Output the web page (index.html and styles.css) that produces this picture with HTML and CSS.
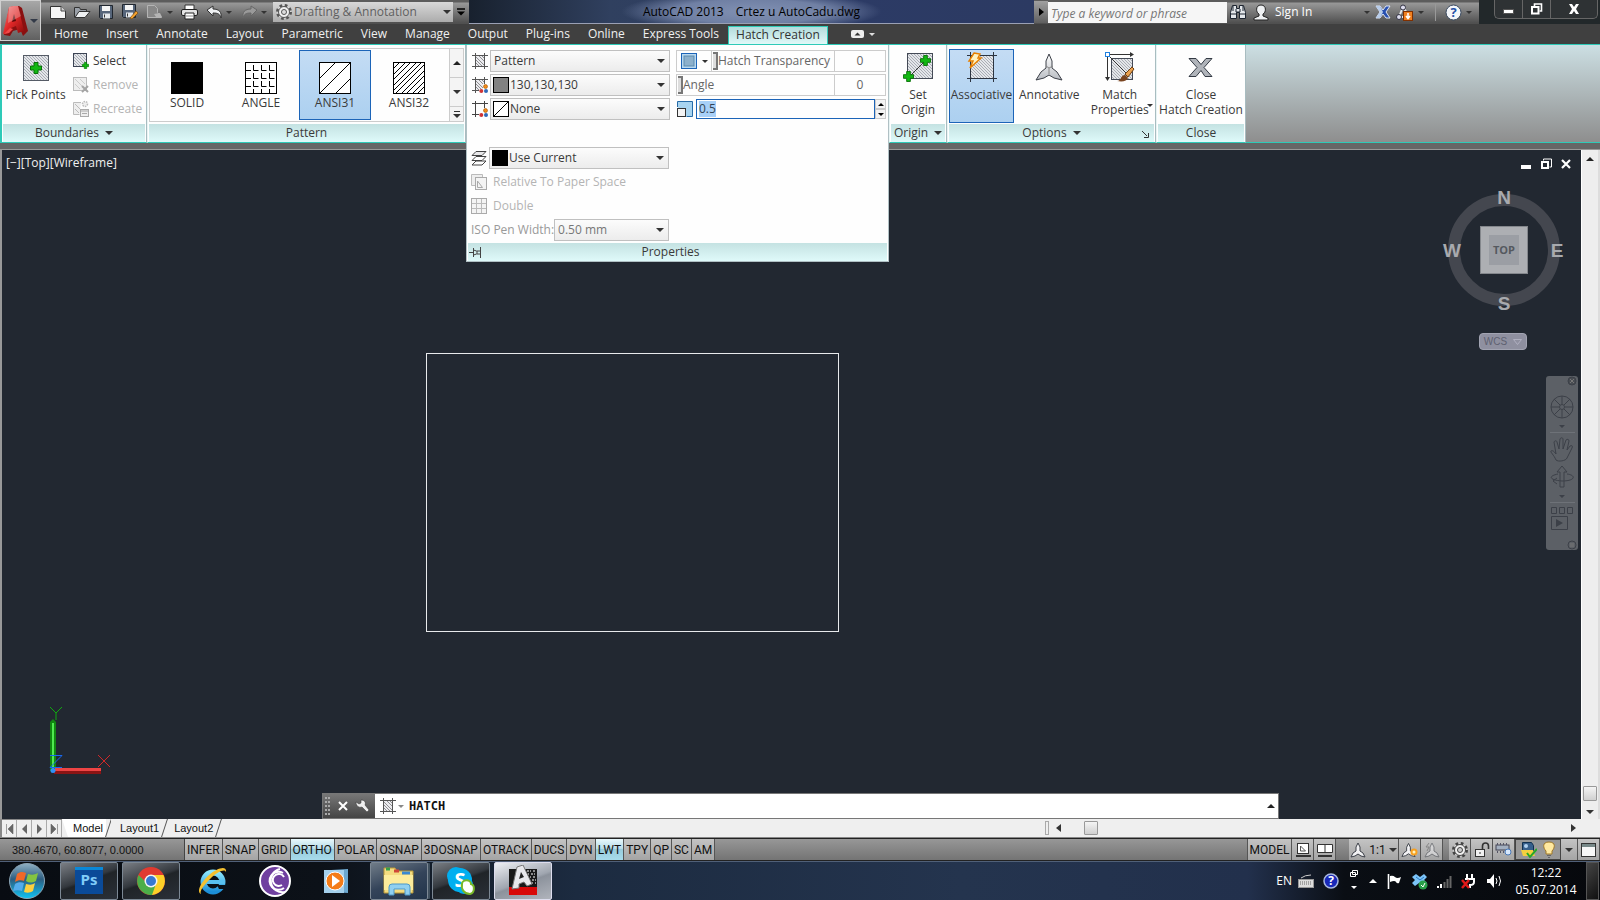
FILE: index.html
```html
<!DOCTYPE html>
<html lang="en">
<head>
<meta charset="utf-8">
<title>AutoCAD 2013 - Crtez u AutoCadu.dwg</title>
<link rel="stylesheet" href="styles.css">
</head>
<body>
<svg class="defs" width="0" height="0" aria-hidden="true">
  <defs>
    <pattern id="h" width="3" height="3" patternUnits="userSpaceOnUse"><rect width="3" height="3" fill="#e4e6ea"/><path d="M-1 -1L4 4M-1 2L1 4M2 -1L4 1" stroke="#9a9ea6" stroke-width=".8"/></pattern>
    <linearGradient id="logo" x1="0" y1="0" x2="1" y2="1"><stop offset="0" stop-color="#f08080"/><stop offset=".5" stop-color="#e02828"/><stop offset="1" stop-color="#8a0a0a"/></linearGradient>
    <linearGradient id="orb" x1="0" y1="0" x2="0" y2="1"><stop offset="0" stop-color="#8fb0c4"/><stop offset=".45" stop-color="#2c5d80"/><stop offset="1" stop-color="#10c4f4"/></linearGradient>
    <linearGradient id="ie" x1="0" y1="0" x2="0" y2="1"><stop offset="0" stop-color="#8ae4fc"/><stop offset="1" stop-color="#1c8fd8"/></linearGradient>
    <linearGradient id="steel" x1="0" y1="0" x2="0" y2="1"><stop offset="0" stop-color="#fff"/><stop offset="1" stop-color="#b8bcc2"/></linearGradient>
    <symbol id="plus" viewBox="0 0 12 12"><path d="M4 .5h4v3.500h3.500v4h-3.500v3.500h-4v-3.500h-3.500v-4h3.500z" fill="#12b812" stroke="#087008"/></symbol>
    <symbol id="hatch" viewBox="0 0 16 16"><path d="M3.500 0v16M0 2.500h16M12.500 0v16M0 13.500h16" stroke="#555" fill="none"/><rect x="4" y="3" width="8" height="10" fill="#ececf0"/><path d="M4 4l8 8M7 3l5 5M10 3l2 2M4 7l6 6M4 10l3 3" stroke="#777" stroke-width=".8"/></symbol>
    <symbol id="dots" viewBox="0 0 9 9"><rect x="0" y="5" width="9" height="4" fill="#fefefe"/><rect x="4" y="0" width="5" height="5" fill="#fefefe"/><circle cx="6.500" cy="2.500" r="2" fill="#f08a18" stroke="#a85400" stroke-width=".6"/><circle cx="2.300" cy="7" r="2" fill="#d03434"/><circle cx="7" cy="7" r="2" fill="#2f68b8"/></symbol>
    <symbol id="annot" viewBox="0 0 28 28"><path d="M14 1l3 7v7l5 4 5 8-8-2-5-3-5 3-8 2 5-8 5-4v-7z" fill="url(#steel)" stroke="#3c4048"/><path d="M14 15v6M14 15l-3-2M14 15l4-2" stroke="#888" fill="none"/></symbol>
    <symbol id="annots" viewBox="0 0 16 16"><path d="M8 1l2 4v4l3 2 2 4-4-1-3-2-3 2-4 1 2-4 3-2v-4z" fill="#f2f2f4" stroke="#3c4048"/></symbol>
    <symbol id="floppy" viewBox="0 0 14 14"><path d="M.5.5h13v13h-12l-1-1z" fill="#56657a" stroke="#20262e"/><rect x="3" y="1" width="8" height="5" fill="#f4f4f4"/><rect x="4" y="8.500" width="7" height="5" fill="#e4e8ec"/><path d="M5.500 9.500v3" stroke="#333"/></symbol>
  </defs>
</svg>

<header class="head">
  <button class="appbtn" aria-label="Application menu">
    <svg width="26" height="34" viewBox="0 0 26 34"><path d="M1 31L6 4l4-2h6l3 2 6 23-5 5-3-7-7 2-3 5z" fill="#8a1010"/><path d="M0 30L6 3l4-1h5l6 25-6 2-2-7-5 2-2 5z" fill="url(#logo)"/><path d="M9 18l2-8 2 7z" fill="#5c0808"/><path d="M6 3l4-1h5l3 10-13 7z" fill="#fff" opacity=".28"/><path d="M1 30l5-1 4-4-3-1z" fill="#f04848"/></svg>
    <i class="tri lite"></i>
  </button>
  <div class="titlebar">
    <div class="quick">
      <button aria-label="New"><svg width="18" height="16"><path d="M1.500 2.500h11l4 4v8h-15z" fill="#f6f6f6" stroke="#333"/><path d="M12 2v5h5" fill="#ccc" stroke="#444"/></svg></button>
      <button aria-label="Open"><svg width="18" height="16"><path d="M1.500 13.500v-10h5l1 2h6v2" fill="#9aa0a8" stroke="#333"/><path d="M2 13.500l4-6h11l-5 6z" fill="#eef0f2" stroke="#333"/></svg></button>
      <button aria-label="Save"><svg width="14" height="14"><use href="#floppy"/></svg></button>
      <button aria-label="Save as"><svg width="17" height="16"><use href="#floppy" width="14" height="14"/><path d="M8 14l6-7 2 2-6 6z" fill="#f0a030" stroke="#704000" stroke-width=".6"/></svg></button>
      <button class="wide" aria-label="Plot preview" disabled><svg width="18" height="16"><path d="M1.500 1.500h7l3 3v4l4 5h-14z" fill="#888" stroke="#b4b4b4"/><path d="M8 10l6-1 2 4h-6z" fill="#b4b4b4"/></svg><i class="tri"></i></button>
      <button aria-label="Plot"><svg width="17" height="16"><path d="M4 5v-4h9v4" fill="#fff" stroke="#333"/><rect x=".5" y="5.500" width="16" height="6" rx="1.500" fill="#e4e4e4" stroke="#222"/><path d="M4 9h9v6h-9z" fill="#fff" stroke="#222"/><path d="M5 12h7" stroke="#888"/></svg></button>
      <button class="wide" aria-label="Undo"><svg width="17" height="14"><path d="M1 5l6-4v3c6 0 9 3 8 9-1-4-3-5-8-5v3z" fill="#eef0f2" stroke="#333"/></svg><i class="tri"></i></button>
      <button class="wide" aria-label="Redo" disabled><svg width="17" height="14"><path d="M16 5l-6-4v3c-6 0-9 3-8 9 1-4 3-5 8-5v3z" fill="#999" stroke="#666"/></svg><i class="tri"></i></button>
      <label class="workspace"><svg width="18" height="18" viewBox="-9 -9 18 18"><circle r="6.500" fill="#eee" stroke="#555" stroke-width="3" stroke-dasharray="2.600 2.500"/><circle r="5.500" fill="#eee" stroke="#555"/><circle r="2.500" fill="#ddd" stroke="#555"/></svg>
        <select aria-label="Workspace"><option>Drafting &amp; Annotation</option></select><i class="tri dark"></i></label>
      <button class="custom" aria-label="Customize toolbar"><svg width="10" height="8"><path d="M1 1h8" stroke="#000" stroke-width="1.500"/><path d="M1 3.500h8l-4 4z"/></svg></button>
    </div>
    <div class="caption"><span>AutoCAD 2013</span><span>Crtez u AutoCadu.dwg</span></div>
    <div class="info">
      <button class="expand" aria-label="Collapse search"><svg width="5" height="8"><path d="M0 0l5 4-5 4z"/></svg></button>
      <input type="text" placeholder="Type a keyword or phrase" aria-label="Search">
      <button aria-label="Find"><svg width="16" height="16"><path d="M.5 14.500v-6l2-7h4v3h3v-3h4l2 7v6h-6v-6h-3v6z" fill="#e4e8ec" stroke="#1c2430"/><path d="M.5 10h6M9.500 10h6M3 2v5M13 2v5M6 5v3h4v-3" stroke="#1c2430" fill="none"/></svg></button>
      <button class="sign"><svg width="16" height="17"><path d="M8 1c6 0 5 8 2 9v2l5 2v2h-14v-2l5-2v-2c-3-1-4-9 2-9z" fill="#eef0f2" stroke="#222"/></svg>Sign In<i class="tri"></i></button>
      <button aria-label="Exchange"><svg width="16" height="14"><path d="M1 1h4l3 4 3-4h4l-4 6 4 6h-4l-3-4-3 4h-4l4-6z" fill="#2850b0" stroke="#dde4f4"/><path d="M1 1h4l3 6-3 6h-4l4-6z" fill="#b8cdea"/></svg></button>
      <button class="wide2" aria-label="Stay connected"><svg width="18" height="17"><path d="M7 3l-4 10h6M7 3l4 6" stroke="#e8eaec" stroke-width="2" fill="none"/><circle cx="7" cy="3.500" r="2.500" fill="#dde" stroke="#334"/><circle cx="3" cy="13" r="2.500" fill="#dde" stroke="#334"/><rect x="7.500" y="7.500" width="9" height="9" fill="#f08020" stroke="#803000"/><path d="M12 9v5M10 12l2 2.500 2-2.500" stroke="#fff" fill="none" stroke-width="1.500"/></svg><i class="tri"></i></button>
      <button class="help" aria-label="Help"><svg width="17" height="17"><circle cx="8.500" cy="8.500" r="7.500" fill="#f4f6fa" stroke="#3a4a60"/><text x="8.500" y="13" text-anchor="middle" class="qm">?</text></svg><i class="tri"></i></button>
    </div>
    <div class="winctl">
      <button aria-label="Minimize"><svg width="13" height="12"><rect x="1.500" y="6.500" width="10" height="4" fill="#fff" stroke="#555"/></svg></button>
      <button aria-label="Restore"><svg width="13" height="12"><path d="M4.500 3v-2h7v7h-2" stroke="#fff" stroke-width="1.600" fill="none"/><rect x="2" y="4" width="6.500" height="6.500" fill="none" stroke="#fff" stroke-width="2"/></svg></button>
      <button class="x" aria-label="Close"><svg width="12" height="10"><path d="M1 0h3l2 3 2-3h3l-3 5 3 5h-3l-2-3-2 3h-3l3-5z" fill="#fff"/></svg></button>
    </div>
  </div>
  <nav class="tabs">
    <button>Home</button><button>Insert</button><button>Annotate</button><button>Layout</button><button>Parametric</button><button>View</button><button>Manage</button><button>Output</button><button>Plug-ins</button><button>Online</button><button>Express Tools</button><button class="on">Hatch Creation</button>
    <button class="mini" aria-label="Minimize ribbon"><svg width="24" height="8"><rect width="13" height="8" rx="2" fill="#eee"/><path d="M3.500 5.500h6l-3-3z" fill="#333"/><path d="M18 3h6l-3 3z" fill="#ddd"/></svg></button>
  </nav>
</header>

<section class="ribbon">
  <div class="panel bounds">
    <div class="body">
      <button class="big pick"><svg width="28" height="30"><rect x="1.500" y="3.500" width="25" height="25" fill="url(#h)" stroke="#555b66"/><use href="#plus" x="8" y="10" width="12" height="12"/></svg>Pick Points</button>
      <div class="smalls">
        <button><svg width="18" height="18"><rect x="1.500" y="1.500" width="13" height="13" fill="url(#h)" stroke="#3c4454"/><use href="#plus" x="10" y="10" width="7" height="7"/></svg>Select</button>
        <button disabled><svg width="18" height="18"><rect x="1.500" y="1.500" width="13" height="13" fill="#eee" stroke="#bbb"/><path d="M3 3l10 10M3 8l5 5M8 3l5 5" stroke="#ccc"/><path d="M10 10l6 6M16 10l-6 6" stroke="#a4a4a4" stroke-width="2"/></svg>Remove</button>
        <button disabled><svg width="18" height="18"><path d="M9 2.500h-7.500v12h6" fill="#eee" stroke="#bbb"/><path d="M3 4l5 5M3 9l4 4" stroke="#bbb"/><circle cx="13" cy="4" r="2.500" fill="#eee" stroke="#bbb" stroke-width="1.500" stroke-dasharray="1.500 1"/><rect x="8.500" y="9.500" width="8" height="7" fill="#eee" stroke="#aaa"/><path d="M8.500 11h8M10 13.500h5" stroke="#aaa"/></svg>Recreate</button>
      </div>
    </div>
    <button class="foot">Boundaries<i class="tri dark"></i></button>
  </div>
  <div class="panel pattern">
    <div class="body">
      <div class="gallery">
        <button><svg width="32" height="32"><rect width="32" height="32"/></svg>SOLID</button>
        <button><svg width="32" height="32"><rect x=".5" y=".5" width="31" height="31" fill="#fff" stroke="#000"/><path d="M1 8.500h5M8.500 3v5.500h5M16.500 3v5.500h5M24.500 3v5.500h5M1 16.500h5M8.500 11v5.500h5M16.500 11v5.500h5M24.500 11v5.500h5M1 24.500h5M8.500 19v5.500h5M16.500 19v5.500h5M24.500 19v5.500h5M8.500 27v4M16.500 27v4M24.500 27v4" stroke="#000" fill="none"/></svg>ANGLE</button>
        <button class="on"><svg width="32" height="32"><rect x=".5" y=".5" width="31" height="31" fill="#fff" stroke="#000"/><path d="M1 16L16 1M1 31L31 1M17 31L31 17" stroke="#000"/></svg>ANSI31</button>
        <button><svg width="32" height="32"><rect x=".5" y=".5" width="31" height="31" fill="#fff" stroke="#000"/><path d="M1 6l5-5M1 12L12 1M1 17L17 1M1 23L23 1M1 28L28 1M3 31L31 3M9 31L31 9M14 31L31 14M20 31L31 20M25 31l6-6" stroke="#000"/></svg>ANSI32</button>
        <div class="gscroll">
          <button aria-label="Up"><i class="tri up dark"></i></button><button aria-label="Down"><i class="tri dark"></i></button><button class="more" aria-label="More patterns"><svg width="8" height="8"><path d="M1 1.500h6" stroke="#333"/><path d="M0 4h8l-4 4z" fill="#333"/></svg></button>
        </div>
      </div>
    </div>
    <div class="foot">Pattern</div>
  </div>
  <div class="slot">
    <form class="props">
      <div class="cols">
        <div class="colA">
          <div class="row"><svg width="16" height="16"><use href="#hatch"/></svg><span class="combo"><select aria-label="Hatch type"><option>Pattern</option></select><i class="tri dark"></i></span></div>
          <div class="row"><svg width="16" height="16"><use href="#hatch"/><use href="#dots" x="7" y="7" width="9" height="9"/></svg><span class="combo"><b class="sw gray"></b><select aria-label="Hatch color"><option>130,130,130</option></select><i class="tri dark"></i></span></div>
          <div class="row"><svg width="16" height="16"><path d="M3.500 0v16M0 2.500h16M12.500 0v8M0 13.500h8" stroke="#444"/><use href="#dots" x="7" y="7" width="9" height="9"/></svg><span class="combo"><b class="sw none"><svg width="14" height="14"><path d="M0 14L14 0" stroke="#000"/></svg></b><select aria-label="Background color"><option>None</option></select><i class="tri dark"></i></span></div>
        </div>
        <div class="colB">
          <div class="row field"><button type="button" class="tbtn" aria-label="Transparency"><svg width="16" height="16"><rect x=".5" y=".5" width="15" height="15" fill="#b8d8f0" stroke="#1c64b8"/><rect x="3" y="3" width="10" height="10" fill="#8cb0cc" stroke="#5c8cb0"/></svg><i class="tri"></i></button><i class="grip"></i><span class="grow">Hatch Transparency</span><output>0</output></div>
          <div class="row field"><i class="grip"></i><span class="grow">Angle</span><output>0</output></div>
          <div class="row scale"><svg width="16" height="16"><path d="M.5 6v-5.500h15v15h-6" fill="#a8d4f0" stroke="#286ca8"/><rect x=".5" y="7.500" width="8" height="8" fill="#f4f4f4" stroke="#333"/></svg><span class="numbox"><span class="sel"><input type="text" value="0.5" aria-label="Hatch pattern scale"></span></span><span class="spin"><button type="button" aria-label="Increase"><i class="tri up"></i></button><button type="button" aria-label="Decrease"><i class="tri"></i></button></span></div>
        </div>
      </div>
      <div class="lower">
        <div class="row"><svg width="16" height="16"><path d="M1 15l4-4h10l-4 4z" fill="#fff" stroke="#444"/><path d="M1 10.500l4-4h10l-4 4z" fill="#fff" stroke="#444"/><path d="M1 5.500l4-4h10l-4 4z" fill="#e8e8ea" stroke="#444"/></svg><span class="combo"><b class="sw black"></b><select aria-label="Layer"><option>Use Current</option></select><i class="tri dark"></i></span></div>
        <button type="button" class="row plain" disabled><svg width="16" height="16"><path d="M4 11.500h-3.500v-11h11v3" fill="#eee" stroke="#bbb"/><rect x="4.500" y="3.500" width="11" height="12" fill="#f4f4f4" stroke="#aaa"/><path d="M6.500 7v6.500h5z" fill="none" stroke="#aaa"/></svg>Relative To Paper Space</button>
        <button type="button" class="row plain" disabled><svg width="16" height="16"><rect x=".5" y=".5" width="15" height="15" fill="#f4f4f4" stroke="#aaa"/><path d="M5.500 1v14M10.500 1v14M1 5.500h14M1 10.500h14" stroke="#bbb"/></svg>Double</button>
        <div class="row iso"><label for="iso">ISO Pen Width:</label><span class="combo"><select id="iso" disabled><option>0.50 mm</option></select><i class="tri"></i></span></div>
      </div>
      <div class="foot"><svg class="pin" width="14" height="12"><path d="M0 6.500h4M4.500 2v9M11.500 1v11M4.500 4l3 1h4M4.500 9l3-1h4M8 5v3" stroke="#444" fill="none"/></svg>Properties</div>
    </form>
  </div>
  <div class="panel origin">
    <div class="body"><button class="big"><svg width="30" height="30"><rect x="4.500" y="1.500" width="25" height="25" fill="url(#h)" stroke="#444a56"/><path d="M6 25L22 9" stroke="#333"/><use href="#plus" x="17" y="3" width="11" height="11"/><use href="#plus" x="0" y="19" width="11" height="11"/></svg>Set<br>Origin</button></div>
    <button class="foot">Origin<i class="tri dark"></i></button>
  </div>
  <div class="panel options">
    <div class="body">
      <button class="big on"><svg width="30" height="30"><rect x="4" y="4" width="22" height="22" fill="url(#h)"/><path d="M3.500 0v30M0 3.500h30M26.500 0v30M0 26.500h30" stroke="#2c3440"/><path d="M7 1l6 1-2 4 3 0-11 10 3-7-4 0z" fill="#fff2c0" stroke="#e88000" stroke-width="1.500"/></svg>Associative</button>
      <button class="big"><svg width="30" height="30"><use href="#annot" x="1" y="1" width="28" height="28"/></svg>Annotative</button>
      <button class="big match"><svg width="30" height="30"><rect x="6.500" y="6.500" width="21" height="21" fill="url(#h)" stroke="#444a56"/><path d="M5 2.500h22M2.500 5v22M4 4l20 20" stroke="#333"/><path d="M25 0l4 2.500-4 2.500zM0 25h5l-2.500 4z" fill="#333"/><rect x=".5" y=".5" width="4" height="4" fill="#fff" stroke="#2080e0"/><path d="M20 22l7-7 2 2-6 8z" fill="#e8a050" stroke="#704010"/><path d="M12 29c5 0 3-6 8-6l3 3c-1 3-5 4-11 3z" fill="#7a4420"/></svg>Match<br>Properties<i class="tri dark"></i></button>
    </div>
    <button class="foot">Options<i class="tri dark"></i><svg class="launch" width="7" height="7"><path d="M0 0l5 5M6.500 2v4.500h-4.500" stroke="#333" fill="none"/></svg></button>
  </div>
  <div class="panel close">
    <div class="body"><button class="big"><svg width="30" height="30"><path d="M3 6.500h7l5 6 5-6h6l-8 9 8 9h-7l-4-6-5 6h-7l8-9z" fill="#b0b4ba" stroke="#333a44"/></svg>Close<br>Hatch Creation</button></div>
    <div class="foot">Close</div>
  </div>
  <div class="rest"></div>
</section>

<main class="work">
  <div class="canvas">
    <div class="viewlabel"><button>[−]</button><button>[Top]</button><button>[Wireframe]</button></div>
    <svg class="shape" width="413" height="279"><rect x=".5" y=".5" width="412" height="278" fill="none" stroke="#e8eaec"/></svg>
    <svg class="ucs" width="64" height="74"><rect x="1" y="15" width="6" height="49" fill="#108810"/><rect x="3" y="16" width="2" height="48" fill="#50e850"/><path d="M1 15l3-3 3 3z" fill="#108810"/><rect x="6" y="61" width="46" height="3" fill="#ee4444"/><rect x="5" y="64" width="47" height="3" fill="#8a1414"/><path d="M1 0l6 6M13 0l-6 6v7" stroke="#10a810" fill="none"/><path d="M49 48l12 12M61 48l-12 12" stroke="#d02828"/><path d="M1 48.500h12l-12 12h12" stroke="#1868f0" fill="none"/><circle cx="4" cy="63.500" r="2.500" fill="#3090f8"/></svg>
    <div class="docctl">
      <button aria-label="Minimize drawing"><svg width="12" height="12"><rect x="1" y="7" width="10" height="4" fill="#fff"/></svg></button>
      <button aria-label="Restore drawing"><svg width="12" height="12"><path d="M3.500 2.500v-1.500h8v8h-2" stroke="#fff" fill="none"/><rect x="2" y="4" width="6" height="6" fill="none" stroke="#fff" stroke-width="2"/></svg></button>
      <button aria-label="Close drawing"><svg width="12" height="12"><path d="M2 2l8 8M10 2l-8 8" stroke="#fff" stroke-width="2.200"/></svg></button>
    </div>
    <svg class="cube" width="124" height="126" viewBox="-62 -63 124 126"><circle r="50" fill="none" stroke="#44474f" stroke-width="12"/><rect x="-23.500" y="-23.500" width="47" height="47" fill="#adafb3" stroke="#84878c"/><rect x="-15" y="-15" width="30" height="30" fill="#9b9ea4"/><g class="dirs" text-anchor="middle"><text y="-46">N</text><text y="60">S</text><text x="-52" y="7">W</text><text x="53" y="7">E</text></g><text class="top" y="4" text-anchor="middle">TOP</text></svg>
    <button class="wcs">WCS<svg width="9" height="6"><path d="M.5.5h8l-4 5z" fill="none" stroke="#b0b0c0"/></svg></button>
    <svg class="navbar" width="32" height="174"><rect width="32" height="174" rx="3" fill="#5c6066"/><g fill="none" stroke="#3c4048"><circle cx="26" cy="5" r="4" fill="#484c52"/><path d="M24 3l4 4M28 3l-4 4M24 168h4M24 170h4" stroke="#777"/><circle cx="16" cy="31" r="11"/><circle cx="16" cy="31" r="2.500"/><path d="M16 20v8M16 34v8M5 31h8M19 31h8M8 23l6 6M24 23l-6 6M8 39l6-6M24 39l-6-6"/><path d="M10 84c-2-5-6-8-5-9s3 0 5 3l-2-12c1-2 3-1 3 0l2 7 1-10c1-2 3-1 3 0v10l3-9c1-1 3-1 3 1l-2 9 3-4c2-1 3 0 2 2l-5 10c-1 3-9 4-11 2z"/><path d="M14 111v-15h-3l5-6 5 6h-3v15zM12 98c-10 2-9 6 4 7 14 0 14-6 5-7M11 102l-4 3 4 3"/><path d="M5.500 131.500h5v6h-5zM13.500 131.500h5v6h-5zM21.500 131.500h5v6h-5zM5.500 140.500h16v13h-16z"/><circle cx="26" cy="169" r="4"/></g><path d="M4 56.500h25M4 126.500h25" stroke="#6e7278"/><path d="M13 49h6l-3 3zM13 119h6l-3 3zM10 143l7 4-7 4z" fill="#3c4048"/></svg>
    <div class="cmd">
      <div class="cmdgrip"><svg width="6" height="18"><path d="M1 0v18M4 0v18" stroke="#aaa" stroke-width="2" stroke-dasharray="2 2"/></svg><button aria-label="Close command line"><svg width="10" height="10"><path d="M1 1l8 8M9 1l-8 8" stroke="#fff" stroke-width="2"/></svg></button><button aria-label="Customize"><svg width="14" height="14"><path d="M1 3l3 2 2-1 0-3c4 0 5 3 4 5l4 5-2 2-5-5c-3 1-6-1-6-5z" fill="#eee" stroke="#333" stroke-width=".5"/></svg></button></div>
      <svg width="16" height="16"><use href="#hatch"/></svg><i class="tri"></i>
      <input type="text" value="HATCH" aria-label="Command">
      <button class="hist" aria-label="Command history"><i class="tri up dark"></i></button>
    </div>
  </div>
  <div class="vscroll"><i class="tri up dark"></i><span class="thumb"></span><i class="tri dark"></i></div>
</main>

<div class="sheets">
  <div class="nav"><button aria-label="First"><svg width="9" height="10"><path d="M1.500 0v10M8 0l-5 5 5 5z" stroke="#666" fill="#666" stroke-width=".6"/></svg></button><button aria-label="Previous"><svg width="9" height="10"><path d="M7 0l-5 5 5 5z" fill="#666"/></svg></button><button aria-label="Next"><svg width="9" height="10"><path d="M2 0l5 5-5 5z" fill="#666"/></svg></button><button aria-label="Last"><svg width="9" height="10"><path d="M7.500 0v10M1 0l5 5-5 5z" stroke="#666" fill="#666" stroke-width=".6"/></svg></button></div>
  <button class="sheet on">Model</button><button class="sheet">Layout1</button><button class="sheet">Layout2</button>
  <div class="hscroll"><i class="split"></i><svg width="5" height="8"><path d="M5 0L0 4l5 4z" fill="#333"/></svg><span class="thumb"></span><svg class="rt" width="5" height="8"><path d="M0 0l5 4-5 4z" fill="#333"/></svg></div>
</div>

<footer class="status">
  <span class="coords">380.4670, 60.8077, 0.0000</span>
  <button>INFER</button><button>SNAP</button><button>GRID</button><button class="on">ORTHO</button><button>POLAR</button><button>OSNAP</button><button>3DOSNAP</button><button>OTRACK</button><button>DUCS</button><button>DYN</button><button class="on">LWT</button><button>TPY</button><button>QP</button><button>SC</button><button>AM</button>
  <span class="fill"></span>
  <button class="model">MODEL</button>
  <button class="ic" aria-label="Quick view layouts"><svg width="16" height="16"><rect x="2.500" y="1.500" width="11" height="10" fill="#fff" stroke="#333"/><path d="M5.500 4v5h5z" fill="none" stroke="#555"/><path d="M1 14h15" stroke="#333" stroke-width="2"/></svg></button>
  <button class="ic" aria-label="Quick view drawings"><svg width="16" height="16"><path d="M.5 2.500h15v8h-15zM8 2v9" fill="#fff" stroke="#333"/><path d="M1 14h14" stroke="#333" stroke-width="2"/></svg></button>
  <span class="gap"></span>
  <button class="ratio"><svg width="16" height="16"><use href="#annots"/></svg>1:1<i class="tri dark"></i></button>
  <button class="ic" aria-label="Annotation visibility"><svg width="17" height="16"><use href="#annots" width="15" height="16"/><circle cx="13" cy="10" r="3.500" fill="#f8a020"/><circle cx="13" cy="10" r="1.500" fill="#fff4c0"/></svg></button>
  <button class="ic" aria-label="Auto scale"><svg width="16" height="16" opacity=".5"><use href="#annots"/><path d="M5 1l-3 4h3l-2 4" stroke="#555" fill="none"/></svg></button>
  <span class="gap small"></span>
  <button class="ic" aria-label="Workspace switching"><svg width="18" height="18" viewBox="-9 -9 18 18"><circle r="6.500" fill="#eee" stroke="#444" stroke-width="3" stroke-dasharray="2.600 2.500"/><circle r="5.500" fill="#eee" stroke="#444"/><circle r="2.500" fill="#ccc" stroke="#444"/></svg></button>
  <button class="ic" aria-label="Lock toolbars"><svg width="16" height="16"><rect x="1.500" y="7.500" width="9" height="7" fill="#f0f0f0" stroke="#333"/><path d="M8.500 7v-3c0-4 6-4 6 0v3" fill="none" stroke="#333" stroke-width="1.600"/><path d="M6 10v2" stroke="#333"/></svg></button>
  <button class="ic" aria-label="Hardware acceleration"><svg width="17" height="16"><rect x="1" y="3" width="13" height="5" fill="#a4b0c0" stroke="#445"/><path d="M2 10h11M2 2h11" stroke="#556" stroke-dasharray="1 2" stroke-width="2"/><circle cx="13" cy="10" r="3" fill="#d8e8fc" stroke="#4878b8"/></svg></button>
  <span class="trayic"><svg width="17" height="18"><path d="M2.500 1.500h9l2 3v5h-11z" fill="#38608c" stroke="#103050"/><circle cx="6" cy="5" r="2" fill="#b0d0f0"/><path d="M1 9h12l2 6h-12z" fill="#f4d040"/><path d="M7 12l3 4 7-8" stroke="#28a828" stroke-width="2" fill="none"/></svg><svg width="14" height="18"><path d="M7 1c7 0 6 6 3 9v3h-6v-3c-3-3-4-9 3-9z" fill="#ffe9a0" stroke="#a07828"/><path d="M5 14.500h4M6 16.500h2" stroke="#666"/></svg></span>
  <button class="arrow" aria-label="Status bar menu"><i class="tri dark"></i></button>
  <button class="ic" aria-label="Clean screen"><svg width="15" height="14"><rect x=".5" y=".5" width="14" height="13" fill="#f8f8f8" stroke="#333"/><path d="M1 2.500h13" stroke="#788" stroke-width="3"/></svg></button>
</footer>

<div class="taskbar">
  <button class="start" aria-label="Start"><svg width="38" height="38" viewBox="-19 -19 38 38"><circle r="17.500" fill="url(#orb)" stroke="#8ca4b4"/><path d="M-10-7c4-3 6-2 9-1l-2 8c-3-1-6-1-9 1z" fill="#f06828"/><path d="M1-7c4 1 6 1 10-1l-2 8c-4 2-7 2-10 0z" fill="#84c440"/><path d="M-12 3c3-2 6-2 9-1l-2 8c-3-1-6-1-9 0z" fill="#54acec"/><path d="M-1 3c4 1 6 1 9-1l-2 8c-3 2-6 2-9 1z" fill="#fcd040"/></svg></button>
  <button class="app run" aria-label="Photoshop"><svg width="28" height="28"><rect width="28" height="27" fill="#0a4a98"/><rect width="28" height="3" fill="#0a88d8"/><text x="14" y="18" text-anchor="middle" class="ps">Ps</text></svg></button>
  <button class="app run" aria-label="Chrome"><svg width="28" height="28" viewBox="-14 -14 28 28"><circle r="14" fill="#e03a30"/><path d="M-12.500-6A14 14 0 0 0 1 14l6-10-7 2z" fill="#4cae48"/><path d="M1 14A14 14 0 0 0 12.500-6H0l6 6z" fill="#fcd028"/><circle r="6.500" fill="#f4f4f4"/><circle r="5" fill="#3878d0"/></svg></button>
  <button class="app" aria-label="Internet Explorer"><svg width="32" height="32"><circle cx="16" cy="17" r="9.500" fill="none" stroke="url(#ie)" stroke-width="6"/><path d="M8 17h20" stroke="#58c0f0" stroke-width="4"/><path d="M20 20h11v4h-9z" fill="#0a1018"/><path d="M4 29c-5-2 0-12 8-19s18-10 17-3c-1-4-9 0-15 6s-12 13-10 16z" fill="#f4c030"/></svg></button>
  <button class="app" aria-label="BitTorrent"><svg width="32" height="32" viewBox="-16 -16 32 32"><circle r="15" fill="#7040a0" stroke="#fff" stroke-width="2"/><g fill="none" stroke="#fff" stroke-width="2"><path d="M5-12A11 11 0 1 0 10 11"/><path d="M8-8A9 9 0 1 0 9 7"/><path d="M9-4A6 6 0 1 0 7 4"/></g></svg></button>
  <button class="app" aria-label="Media Player"><svg width="28" height="28"><path d="M8 3l17-1v24l-17-1z" fill="#6ca8d0"/><rect x="1" y="3" width="20" height="23" fill="#a4d0ec"/><circle cx="12" cy="14" r="9" fill="#f47c18" stroke="#fff"/><path d="M9 8l8 6-8 6z" fill="#fff"/></svg></button>
  <button class="app run stack" aria-label="Explorer"><svg width="34" height="32"><path d="M2 3h11l2 3h16v22h-29z" fill="#f4dc80" stroke="#b89838"/><path d="M4 4h4" stroke="#38a048" stroke-width="3"/><path d="M12 6h5" stroke="#d04838" stroke-width="3"/><path d="M20 8h8" stroke="#3888d0" stroke-width="3"/><path d="M2 10h29v15h-29z" fill="#fcec9c"/><path d="M7 30v-8q0-3 3-3h15q3 0 3 3v8h-5v-6h-11v6z" fill="#90d0f0" stroke="#4c98c8"/></svg></button>
  <button class="app run" aria-label="Skype"><svg width="32" height="32"><circle cx="11" cy="11" r="9" fill="#00aff0"/><circle cx="19" cy="20" r="9" fill="#00aff0"/><circle cx="15" cy="15" r="12" fill="#00aff0"/><text x="15" y="22" text-anchor="middle" class="sk">S</text><path d="M17 19c0-5 9-5 9 0 4 1 4 9-1 10-6 0-9-5-8-10z" fill="#fff" stroke="#78b828" stroke-width="2"/></svg></button>
  <button class="app run act" aria-label="AutoCAD"><svg width="32" height="32"><rect x="2" y="4" width="28" height="19" fill="#181818"/><path d="M20 6h9M18 9h11M20 12h9M19 15h10M22 18h7" stroke="#8c8c8c" stroke-width="2" stroke-dasharray="2 1 1 2"/><rect x="2" y="22" width="28" height="8" fill="#d80808"/><path d="M5 24l5-22 6-2 9 19-5 2-3-4-5 2v4z" fill="#e8e8ec" stroke="#777"/><path d="M12 14l2-7 3 5z" fill="#222"/></svg></button>
  <span class="fill"></span>
  <div class="tray">
    <span>EN</span>
    <svg width="16" height="14"><path d="M3 4q4-3 10-3" stroke="#ccc" fill="none"/><rect x=".5" y="5.500" width="15" height="8" fill="#ddd" stroke="#999"/><path d="M2 8h12M2 10h12" stroke="#666" stroke-dasharray="1 1"/></svg>
    <svg width="16" height="16"><circle cx="8" cy="8" r="7" fill="#1828b8" stroke="#a8b8e0" stroke-width="1.500"/><text x="8" y="12" text-anchor="middle" class="qw">?</text></svg>
    <svg width="12" height="26"><path d="M4.500 2.500h5v4h-5zM2.500 4.500h5v4h-5z" fill="#0a0e14" stroke="#fff"/><path d="M3 18h6l-3 3z" fill="#fff"/></svg>
    <svg width="8" height="6"><path d="M0 5l4-4 4 4z" fill="#fff"/></svg>
    <svg width="16" height="16"><path d="M2.500 1v15" stroke="#fff" stroke-width="1.600"/><path d="M4 3q3-1 5 1t6 0l-2 6q-2 1-3-1t-6 0z" fill="#fff"/></svg>
    <svg width="17" height="17"><path d="M1 4l4-3 4 3 4-3 3 3-3 3 3 3-4 3-4-3-4 3-3-3 3-3z" fill="#7cc4f8"/><path d="M5 4l4 3 4-3" stroke="#2878c0" fill="none"/><circle cx="12" cy="12" r="4.500" fill="#28a048"/><path d="M10 12l2 2 2-4" stroke="#fff" fill="none"/></svg>
    <svg width="15" height="14"><path d="M1 14v-2M4 14v-4" stroke="#fff" stroke-width="2"/><path d="M7.500 14v-6M10.500 14v-9M13.500 14v-12" stroke="#666" stroke-width="2"/></svg>
    <svg width="16" height="16"><path d="M6 1v4M11 1v4M4 6h9v3q0 3-4 3v3" stroke="#fff" stroke-width="2" fill="none"/><path d="M1 7l7 8M8 7l-7 8" stroke="#e01818" stroke-width="2.500"/></svg>
    <svg width="16" height="16"><path d="M1 6h3l4-5v14l-4-5h-3z" fill="#fff"/><path d="M10 5q2 3 0 6M13 3q3 5 0 10" stroke="#fff" fill="none"/></svg>
  </div>
  <div class="clock"><time>12:22</time><time>05.07.2014</time></div>
  <button class="desk" aria-label="Show desktop"></button>
</div>
</body>
</html>
```

FILE: styles.css
```css
* { box-sizing: border-box; }
body { margin: 0; height: 100vh; display: flex; flex-direction: column; overflow: hidden; background: #222831; color: #3a3a3a; font: 12px/16px "Open Sans", "Noto Sans", sans-serif; }
.defs { position: absolute; }
button, input, select { font: inherit; color: inherit; margin: 0; padding: 0; border: 0; background: none; border-radius: 0; outline: 0; appearance: none; }
button { display: flex; align-items: center; justify-content: center; white-space: nowrap; }
svg { flex: none; display: block; }
.tri { flex: none; width: 0; height: 0; border: 4px solid transparent; border-top-color: #333; border-bottom-width: 0; }
.tri.up { border-top-width: 0; border-bottom: 4px solid #222; }
.tri.lite { border-top-color: #333a48; }
.fill { flex: 1; }

/* title bar and tabs */
.head { display: grid; grid-template-columns: 41px 1fr; grid-template-rows: 24px 20px; background: #404040; border-bottom: 1px solid #2ecab8; height: 45px; flex: none; }
.appbtn { grid-row: 1 / 3; height: 41px; background: linear-gradient(#a8a8a8, #8c8c8c 40%, #606060); border: 1px solid #d0d0d0; justify-content: flex-start; gap: 1px; padding-left: 2px; }
.titlebar { display: flex; min-width: 0; background: #141a24; }
.quick, .info { display: flex; align-items: center; background: linear-gradient(#5c5c5c 2px, #989898 3px, #505050 23px); flex: none; }
.quick { padding-left: 5px; width: 428px; }
.quick button { width: 24px; height: 24px; flex: none; }
.quick button.wide { width: 35px; gap: 3px; }
.quick .tri, .info .tri { border-width: 3px; border-bottom-width: 0; }
.workspace { display: flex; align-items: center; flex: 1; height: 20px; margin-left: 2px; padding: 0 2px; background: linear-gradient(#d8d8d8, #acacac); color: #606060; gap: 1px; }
.workspace select { flex: 1; min-width: 0; height: 20px; }
.workspace .tri { border-width: 4px; border-bottom-width: 0; }
.quick .custom { width: 15px; margin-right: 1px; }
.caption { flex: 1; display: flex; justify-content: center; gap: 12px; align-items: center; color: #000; background: radial-gradient(ellipse 130px 20px at 50% 50%, #8090b2 0, #7080a4 60%, transparent), linear-gradient(90deg, #18212e, #30405f 25%, #2c3b66 60%, #2c3a62); border-bottom: 1px solid #9aa0b4; }
.info { width: 445px; color: #fff; gap: 5px; }
.info .expand { width: 14px; height: 22px; margin-right: -5px; background: linear-gradient(#a0a0a0, #606060); }
.info input { width: 179px; height: 21px; background: #f6f6f6; padding: 2px 0 0 3px; font-style: italic; margin-right: -2px; }
.info input::placeholder { color: #777; opacity: 1; }
.info .sign { gap: 6px; width: 117px; justify-content: flex-start; margin-left: 2px; }
.sign .tri { margin-left: auto; }
.info .wide2, .info .help { gap: 4px; }
.info .help { border-left: 1px solid #999; padding-left: 9px; margin-left: 6px; }
.qm { font: bold 13px "Open Sans", sans-serif; fill: #2450a8; }
.winctl { width: 121px; flex: none; display: flex; padding: 0 2px 5px 15px; background: #22282a; }
.winctl button { width: 28px; border: 1px solid #666; border-top: 0; border-right: 0; background: #2e3234; }
.winctl .x { flex: 1; border-right: 1px solid #666; border-radius: 0 0 5px 0; }
.winctl button:first-child { border-radius: 0 0 0 5px; }
.tabs { display: flex; color: #f0f0f0; padding-left: 4px; }
.tabs button { padding: 0 9px; height: 20px; align-self: flex-end; }
.tabs .on { background: linear-gradient(#b4dcdc, #e0f8f8); color: #333; border: 1px solid #2ecab8; border-bottom: 0; height: 18px; padding: 0 7px 2px; }
.tabs .mini { margin-left: 14px; }

/* ribbon */
.ribbon { flex: none; height: 105px; display: flex; padding-bottom: 6px; background: #666; border-bottom: 1px solid #999; }
.panel { display: flex; flex-direction: column; background: #fefefe; border-right: 1px solid #a8bcc0; border-left: 1px solid #e8f4f4; border-bottom: 1px solid #2ecab8; flex: none; }
.body { flex: 1; display: flex; }
.foot { height: 18px; margin: 0 1px; background: linear-gradient(#c4e2e2, #dffafa); display: flex; align-items: center; justify-content: center; gap: 6px; position: relative; }
.bounds { width: 147px; border-left: 2px solid #2ecab8; }
.pattern { width: 319px; }
.slot { width: 423px; flex: none; position: relative; }
.origin { width: 58px; }
.options { width: 209px; }
.close { width: 90px; }
.rest { flex: 1; background: linear-gradient(#ccdfe3, #8e8e8e); border-bottom: 1px solid #2ecab8; }
.big { flex-direction: column; justify-content: flex-start; line-height: 15px; padding-top: 7px; gap: 5px; text-align: center; flex: 1; display: flex; position: relative; white-space: normal; }
.pick { flex: none; width: 67px; white-space: nowrap; }
.smalls { display: flex; flex-direction: column; padding: 4px 0 0 3px; }
.smalls button { height: 24px; gap: 3px; justify-content: flex-start; }
button:disabled { color: #b4b4b4; }
.gallery { flex: 1; display: flex; margin: 3px 1px 2px; border: 1px solid #ccc; }
.gallery > button { width: 72px; flex-direction: column; gap: 1px; padding-top: 3px; margin: 1px; border: 1px solid transparent; }
.gallery > .on, .options .on { background: linear-gradient(#c4dcf4, #acd0f0); border: 1px solid #1c64b8; }
.gscroll { width: 14px; margin-left: auto; display: flex; flex-direction: column; border-left: 1px solid #ccc; background: #f4f4f4; }
.gscroll button { flex: 2; border-bottom: 1px solid #ccc; }
.gscroll .more { flex: 1; border: 0; }
.options .body { padding: 4px 0 1px 1px; }
.options .big { padding-top: 3px; }
.options .on { flex: none; width: 65px; padding-top: 2px; }
.match .tri { position: absolute; right: 2px; bottom: 16px; border-width: 3px; border-bottom-width: 0; }
.launch { position: absolute; right: 5px; bottom: 4px; }

/* expanded properties panel */
.props { position: absolute; z-index: 2; inset: 0 0 auto 0; background: #fefefe; border: 1px solid #b0c0c4; border-top: 0; padding-top: 4px; }
.cols { display: flex; gap: 6px; padding: 0 2px 0 5px; height: 97px; }
.colA { width: 198px; }
.colB { flex: 1; padding-top: 1px; }
.row { display: flex; align-items: center; height: 24px; gap: 2px; }
.combo { flex: 1; display: flex; align-items: center; height: 22px; padding: 0 4px 0 2px; gap: 0; border: 1px solid #c0c0c0; background: linear-gradient(#fcfcfc, #ececec); min-width: 0; }
.combo select { flex: 1; min-width: 0; height: 20px; padding-left: 1px; opacity: 1; }
.sw { width: 16px; height: 16px; border: 1px solid #000; background: #fff; }
.sw.gray { background: #828282; }
.sw.black { background: #000; }
.field { height: 22px; margin-bottom: 2px; border: 1px solid #ccc; color: #666; gap: 0; }
.field .grow { flex: 1; }
.tbtn { width: 35px; height: 20px; gap: 5px; border-right: 1px solid #ccc; }
.tbtn .tri { border-width: 3px; border-bottom-width: 0; }
.grip { width: 5px; height: 18px; margin-left: 1px; border: 2px solid #777; border-left: 0; background: #ddd; }
.field output { width: 51px; height: 20px; line-height: 20px; border-left: 1px solid #ccc; text-align: center; }
.scale { height: 22px; }
.scale svg { margin: 0 1px; }
.numbox { flex: 1; height: 20px; border: 1px solid #1c64b8; padding: 1px 2px; display: flex; }
.sel { background: #a8d0f8; color: #345; height: 16px; display: flex; }
.sel input { width: 17px; height: 16px; }
.spin { width: 11px; height: 20px; display: flex; flex-direction: column; margin-left: -2px; }
.spin button { flex: 1; border: 1px solid #ccc; background: #f4f4f4; }
.spin .tri { border-width: 3px; border-bottom-width: 0; border-top-color: #000; }
.spin .tri.up { border-width: 0 3px 3px; border-bottom-color: #000; }
.lower { width: 202px; padding: 0 0 1px 4px; }
.plain { gap: 6px; justify-content: flex-start; }
.iso { color: #999; gap: 0; white-space: nowrap; }
.iso select { color: #777; }
.props .foot { padding-right: 14px; }
.pin { position: absolute; left: 1px; top: 3px; }

/* drawing area */
.work { flex: 1; display: flex; min-height: 0; border-left: 2px solid #999; border-right: 2px solid #ddd; }
.canvas { flex: 1; position: relative; background: #222831; }
.viewlabel { position: absolute; left: 4px; top: 5px; display: flex; color: #f0f0f0; }
.shape { position: absolute; left: 424px; top: 203px; }
.ucs { position: absolute; left: 47px; bottom: 38px; }
.docctl { position: absolute; right: 9px; top: 8px; display: flex; gap: 8px; }
.cube { position: absolute; right: 15px; top: 37px; }
.dirs { font: bold 19px "Liberation Sans", sans-serif; fill: #a8aaae; }
.top { font: bold 11px "Open Sans", sans-serif; fill: #55595f; }
.wcs { position: absolute; right: 54px; top: 183px; width: 48px; height: 17px; border-radius: 4px; background: #8f90a0; border: 1px solid #a2a4b2; color: #5e6070; font: 10px "Liberation Sans", sans-serif; gap: 6px; }
.navbar { position: absolute; right: 3px; top: 226px; }
.cmd { position: absolute; left: 320px; right: 302px; bottom: 0; height: 26px; display: flex; align-items: center; gap: 5px; background: #fff; border: 1px solid #777; }
.cmdgrip { width: 52px; align-self: stretch; background: linear-gradient(#777, #444); display: flex; align-items: center; gap: 7px; padding-left: 2px; }
.cmd input { flex: 1; min-width: 0; font: bold 12px "DejaVu Sans Mono", monospace; color: #111; }
.cmd > .tri { border-width: 3px 3px 0; border-top-color: #888; margin-left: -3px; }
.hist { width: 15px; height: 24px; }
.vscroll { width: 17px; background: #eee; display: flex; flex-direction: column; align-items: center; padding: 7px 0 5px; border-left: 1px solid #fff; }
.thumb { width: 14px; height: 15px; border: 1px solid #999; background: linear-gradient(#f4f4f4, #d0d0d0); border-radius: 1px; }
.vscroll .thumb { margin: auto 0 9px; }

.sheets { height: 19px; flex: none; background: #efefef; border: solid #888; border-width: 0 0 1px 2px; display: flex; font: 11px/18px "Liberation Sans", sans-serif; color: #111; }
.nav { display: flex; border-top: 1px solid #888; }
.nav button { width: 15px; border-right: 1px solid #aaa; }
.sheet { padding: 0 6px 0 9px; position: relative; z-index: 1; }
.sheet::after { content: ""; position: absolute; right: 0; top: 0; height: 18px; border-right: 1px solid #555; transform: skewX(-18deg); }
.sheet.on { background: linear-gradient(90deg, #fff 90%, transparent 90%); clip-path: polygon(0 0, 100% 0, 100% 100%, 6px 100%); padding: 0 8px 0 11px; }
.sheet.on::after { right: 2px; }
.hscroll { margin-left: auto; width: 555px; display: flex; align-items: center; padding-right: 24px; }
.split { width: 4px; height: 14px; border: 1px solid #aaa; margin-right: 7px; }
.hscroll .thumb { height: 14px; margin-left: 23px; }
.rt { margin-left: auto; }

/* drawing status bar */
.status { height: 23px; flex: none; display: flex; background: linear-gradient(#979797, #747474); border-top: 1px solid #222; border-bottom: 1px solid #222; color: #111; font: 12px/20px Roboto, sans-serif; }
.coords { width: 185px; padding: 1px 0 0 12px; font: 11px/20px "Liberation Sans", sans-serif; border-right: 1px solid #444; }
.status button { padding: 0 2px; border-right: 1px solid #555; background: linear-gradient(#c4c4c4, #a4a4a4); }
.status button.on { background: linear-gradient(#e8f8fc, #b8dce8 45%, #98ccdc 50%, #a8dcec); }
.status .model { border-left: 1px solid #555; width: 45px; }
.status .ic { width: 22px; padding: 0; }
.gap { width: 13px; }
.gap.small { width: 6px; }
.status .ratio { width: 50px; gap: 3px; }
.trayic { width: 46px; display: flex; align-items: center; gap: 5px; padding-left: 4px; border: 1px solid #444; background: #999; }
.status .arrow { width: 17px; }

/* desktop taskbar */
.taskbar { height: 39px; flex: none; display: flex; align-items: center; background: linear-gradient(90deg, #080c12 0, #0c1118 20%, #1c2b40 36%, #24344e 60%, #22304c 78%, #0a0e14 84%, #06080c); border-top: 1px solid #506078; }
.start { width: 54px; margin-right: 6px; }
.app { width: 58px; height: 38px; margin-right: 4px; border-radius: 2px; }
.run { border: 1px solid #7c8894; background: linear-gradient(160deg, #7a7e84, #33383e 45%, #202428 50%, #2a3038); }
.run.stack { background: linear-gradient(160deg, #707c88, #34445a 50%, #22344a); box-shadow: 3px 0 0 -1px #40505e; }
.run.act { background: linear-gradient(160deg, #eef0f4, #a0a6b0 50%, #8c929c 55%, #b0b4bc); border-color: #dde; }
.ps { font: bold 15px "Open Sans", sans-serif; fill: #80ccf8; }
.sk { font: bold 20px "Open Sans", sans-serif; fill: #fff; }
.qw { font: bold 12px "Open Sans", sans-serif; fill: #fff; }
.tray { display: flex; align-items: center; gap: 9px; color: #fff; }
.tray span { margin-right: -3px; }
.clock { width: 84px; display: flex; flex-direction: column; align-items: center; color: #fff; line-height: 17px; padding-left: 4px; }
.desk { width: 13px; height: 38px; margin-right: 1px; border: 1px solid #555; background: linear-gradient(135deg, #444, #111); }
```
